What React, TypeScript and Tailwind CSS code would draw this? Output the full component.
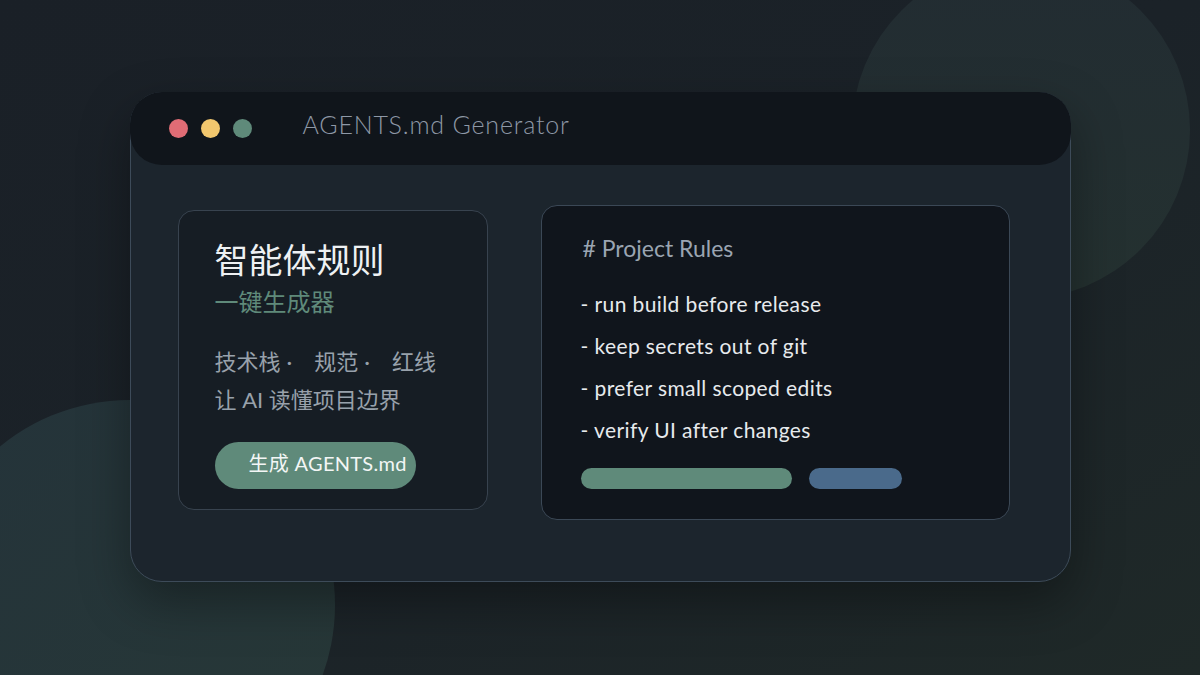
const rules = [
  '- run build before release',
  '- keep secrets out of git',
  '- prefer small scoped edits',
  '- verify UI after changes',
];

const font = { fontFamily: '"Lato", "Noto Sans CJK SC", sans-serif' };

export default function App() {
  return (
    <div
      className="relative h-[675px] w-[1200px] overflow-hidden bg-gradient-to-br from-[#1a2027] via-[#1b2228] to-[#1f2928]"
      style={font}
    >
      {/* background blobs */}
      <div className="absolute left-[852px] top-[-39px] h-[338px] w-[338px] rounded-full bg-gradient-to-b from-[#222c32] to-[#243130]" />
      <div className="absolute left-[-75px] top-[400px] h-[410px] w-[410px] rounded-full bg-gradient-to-br from-[#24333a] to-[#273837]" />

      <div className="relative flex h-full w-full items-start justify-center pt-[92px]">
        {/* window */}
        <div className="flex h-[490px] w-[941px] flex-col rounded-[32px] border border-[#3d4b59] bg-[#1c252d] shadow-[0_20px_50px_rgba(0,0,0,0.35)]">
          <div className="-mx-px -mt-px flex h-[73px] items-center rounded-[32px] bg-[#10151b] pl-[39px]">
            <div className="flex gap-[13px]">
              <span className="h-[19px] w-[19px] rounded-full bg-[#e06c75]" />
              <span className="h-[19px] w-[19px] rounded-full bg-[#f2c76e]" />
              <span className="h-[19px] w-[19px] rounded-full bg-[#5f8a7a]" />
            </div>
            <span className="ml-[51px] -mt-[8px] text-[25px] font-light tracking-[0.8px] text-[#8e98a6]">AGENTS.md Generator</span>
          </div>

          <div className="flex items-start gap-[53px] pl-[47px]">
            {/* left card */}
            <div className="mt-[45px] flex h-[300px] w-[310px] flex-col rounded-[16px] border border-[#38434f] bg-[#161d24] pl-[36px] pt-[27px]">
              <div className="text-[34px] leading-[44px] text-[#eef1f3]">智能体规则</div>
              <div className="mt-[3px] text-[24px] leading-[34px] text-[#5f8a7a]">一键生成器</div>
              <div className="mt-[24px] text-[22px] leading-[38px] text-[#98a1ab]">
                <div className="flex">
                  <span>技术栈</span>
                  <span className="ml-[6px] mr-[22px]">·</span>
                  <span>规范</span>
                  <span className="ml-[6px] mr-[22px]">·</span>
                  <span>红线</span>
                </div>
                <div>让 AI 读懂项目边界</div>
              </div>
              <div className="mt-[23px] flex h-[47px] w-[201px] items-center overflow-hidden whitespace-nowrap rounded-full bg-[#5f8a7a] pb-[6px] pl-[34px] text-[20px] tracking-[0.3px] text-[#f3f6f5]">
                生成 AGENTS.md
              </div>
            </div>

            {/* right card */}
            <div className="mt-[40px] flex h-[315px] w-[469px] flex-col rounded-[16px] border border-[#3b4856] bg-[#10151c] pl-[39px] pt-[28px]">
              <div className="text-[23px] leading-[28px] text-[#9ba5b2]">
                <span className="ml-[2px]"># Project Rules</span>
              </div>
              <div className="mt-[21px] flex flex-col text-[21px] leading-[42px] tracking-[0.4px] text-[#e7eaed]">
                {rules.map((r) => (
                  <div key={r}>{r}</div>
                ))}
              </div>
              <div className="mt-[17px] flex gap-[17px]">
                <div className="h-[21px] w-[211px] rounded-full bg-[#5f8a7a]" />
                <div className="h-[21px] w-[93px] rounded-full bg-[#4a6a8b]" />
              </div>
            </div>
          </div>
        </div>
      </div>
    </div>
  );
}
